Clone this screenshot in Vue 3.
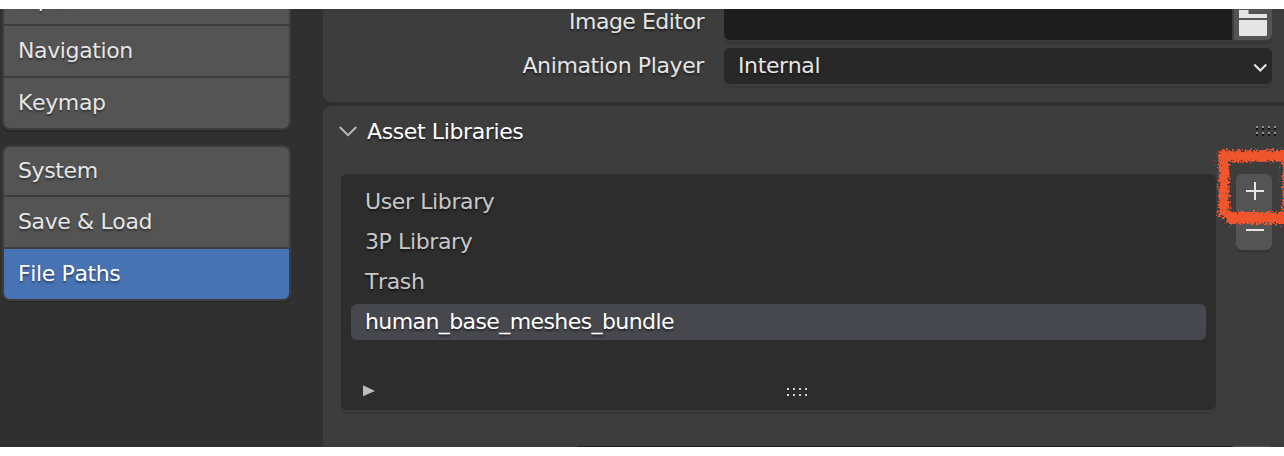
<script setup>
import { ref } from 'vue'

const groups = [
  ['Input', 'Navigation', 'Keymap'],
  ['System', 'Save & Load', 'File Paths']
]

const libraries = [
  'User Library',
  '3P Library',
  'Trash',
  'human_base_meshes_bundle'
]

const activeSection = ref('File Paths')
const activeLibrary = ref('human_base_meshes_bundle')
</script>

<template>
  <div class="preferences">
    <nav class="sidebar">
      <div
        v-for="(group, index) in groups"
        :key="index"
        class="group"
      >
        <button
          v-for="section in group"
          :key="section"
          class="section"
          :class="{ active: section === activeSection }"
          @click="activeSection = section"
        >
          {{ section }}
        </button>
      </div>
    </nav>

    <main class="content">
      <section class="panel applications">
        <div class="row">
          <label class="image-label">Image Editor</label>
          <div class="path-field">
            <div class="path"></div>
            <button class="folder">
              <svg width="28" height="27" viewBox="0 0 28 27">
                <path d="M0 1h9.5v4H28v4H0z M0 11h28v15a1 1 0 0 1-1 1H1a1 1 0 0 1-1-1z" fill="#e5e5e5" />
              </svg>
            </button>
          </div>
        </div>

        <div class="row">
          <label>Animation Player</label>
          <button class="dropdown">
            <span>Internal</span>
            <svg width="14" height="10" viewBox="0 0 14 10">
              <path d="M1.3 1.5l6 6 6-6" fill="none" stroke="#e5e5e5" stroke-width="2.2" />
            </svg>
          </button>
        </div>
      </section>

      <section class="panel libraries">
        <header class="panel-header">
          <svg width="18" height="11" viewBox="0 0 18 11">
            <path d="M.7 1l8.3 8.2L17.3 1" fill="none" stroke="#bcbcbc" stroke-width="2" />
          </svg>
          <h2>Asset Libraries</h2>
          <div class="grip">
            <i v-for="n in 8" :key="n"></i>
          </div>
        </header>

        <div class="library-body">
          <div class="list">
            <div
              v-for="library in libraries"
              :key="library"
              class="item"
              :class="{ selected: library === activeLibrary }"
              @click="activeLibrary = library"
            >
              {{ library }}
            </div>

            <div class="list-footer">
              <svg width="12" height="12" viewBox="0 0 12 12">
                <path d="M0 .3L12 6 0 11.3z" fill="#bcbcbc" />
              </svg>
              <div class="grip light">
                <i v-for="n in 8" :key="n"></i>
              </div>
            </div>
          </div>

          <div class="actions">
            <button>
              <svg width="18" height="18" viewBox="0 0 18 18">
                <path d="M0 9h18M9 0v18" stroke="#e5e5e5" stroke-width="2" />
              </svg>
            </button>
            <button>
              <svg width="18" height="2" viewBox="0 0 18 2">
                <path d="M0 1h18" stroke="#e5e5e5" stroke-width="2" />
              </svg>
            </button>
          </div>
        </div>

        <div class="next-row">
          <div class="next-path"></div>
          <div class="next-button"></div>
        </div>
      </section>
    </main>

    <!-- brush stroke around the add button -->
    <svg class="marker" width="74" height="84" viewBox="0 0 74 84">
      <filter id="rough" x="0" y="0" width="80" height="84" filterUnits="userSpaceOnUse">
        <feTurbulence type="fractalNoise" baseFrequency="0.45" numOctaves="3" seed="4" />
        <feDisplacementMap in="SourceGraphic" scale="10" xChannelSelector="R" yChannelSelector="G" />
      </filter>
      <g filter="url(#rough)" fill="none" stroke="#f0542d">
        <path d="M8.5 12H80" stroke-width="11.5" />
        <path d="M14 7V73" stroke-width="10.5" />
        <path d="M16.5 74H80" stroke-width="12" />
        <path d="M76 8V74" stroke-width="7" />
      </g>
    </svg>
  </div>
</template>

<style>
body {
  margin: 0;
  background: #fff;
}
</style>

<style scoped>
.preferences {
  position: relative;
  display: flex;
  width: 1284px;
  height: 438px;
  margin: 9px 0;
  overflow: hidden;
  background: #303030;
  color: #e5e5e5;
  font-family: 'DejaVu Sans', sans-serif;
  font-size: 22px;
  font-kerning: none;
  letter-spacing: -0.38px;
}

button {
  display: flex;
  padding: 0;
  border: 0;
  background: #545454;
  color: inherit;
  font: inherit;
  font-kerning: none;
  letter-spacing: inherit;
  text-shadow: inherit;
}

svg {
  display: block;
  flex: none;
}

.sidebar {
  flex: none;
  width: 289px;
  margin: -36px 32px 0 2px;
}

.group {
  display: flex;
  flex-direction: column;
  gap: 2px;
  margin-bottom: 15px;
  padding: 2px;
  overflow: hidden;
  border-radius: 8px;
  background: #3d3d3d;
  box-shadow: 0 2px 0 #2b2b2b;
}

.section {
  align-items: center;
  height: 50px;
  padding: 0 0 1px 14px;
  text-shadow: 0 2px 2px rgba(0, 0, 0, 0.4);
}

.section:first-child {
  height: 48px;
  border-radius: 6px 6px 0 0;
}

.section:last-child {
  border-radius: 0 0 6px 6px;
}

.group:first-child .section:first-child {
  height: 49px;
}

.section.active {
  background: #4772b3;
  color: #fff;
}

.content {
  display: flex;
  flex: 1;
  flex-direction: column;
  gap: 4px;
}

.panel {
  background: #3d3d3d;
  text-shadow: 0 2px 2px rgba(0, 0, 0, 0.5);
}

.applications {
  display: flex;
  flex: none;
  flex-direction: column;
  justify-content: flex-end;
  gap: 8px;
  box-sizing: border-box;
  height: 93px;
  padding: 0 12px 18px 0;
  border-radius: 0 0 0 8px;
}

.row {
  display: flex;
  flex: none;
  justify-content: flex-end;
  gap: 20px;
  height: 36px;
  line-height: 36px;
}

.image-label {
  letter-spacing: -0.5px;
}

.path-field {
  display: flex;
  gap: 2px;
  width: 548px;
  overflow: hidden;
  border-radius: 0 0 6px 6px;
  box-shadow: 0 2px 0 #3d3d3d, 0 4px 0 #363636;
}

.path {
  flex: 1;
  background: #1d1d1d;
}

.folder {
  width: 38px;
  padding: 5px 0 0 5px;
  box-sizing: border-box;
}

.dropdown {
  align-items: center;
  justify-content: space-between;
  box-sizing: border-box;
  width: 548px;
  padding: 0 5px 0 14px;
  border-radius: 6px;
  background: #282828;
  line-height: 36px;
  box-shadow: 0 2px 0 #3d3d3d, 0 4px 0 #363636;
}

.dropdown span {
  height: 36px;
}

.dropdown svg {
  margin-top: 3px;
}

.libraries {
  display: flex;
  flex: 1;
  flex-direction: column;
  border-radius: 8px 0 0 0;
}

.panel-header {
  display: flex;
  align-items: center;
  height: 50px;
  padding: 0 8px 0 16px;
}

.panel-header .grip {
  margin-bottom: 2px;
}

h2 {
  flex: 1;
  margin: 0 0 0 10px;
  color: #fff;
  font-size: inherit;
  font-weight: normal;
}

.grip {
  display: grid;
  grid-template-columns: repeat(4, 2px);
  gap: 4px;
}

.grip i {
  width: 2px;
  height: 2px;
  background: #8e8e8e;
  box-shadow: 0 2px 0 #101010;
}

.grip.light {
  margin-top: 2px;
}

.grip.light i {
  background: #d0d0d0;
  box-shadow: none;
}

.library-body {
  display: flex;
  gap: 20px;
  margin: 18px 12px 0 18px;
}

.list {
  display: flex;
  flex: 1;
  flex-direction: column;
  gap: 4px;
  box-sizing: border-box;
  height: 236px;
  padding: 10px;
  border-radius: 6px;
  background: #2d2d2d;
  color: #c8c8c8;
  box-shadow: 0 2px 0 #3d3d3d, 0 4px 0 #363636;
}

.item {
  height: 36px;
  padding-left: 14px;
  border-radius: 6px;
  line-height: 35px;
}

.item.selected {
  background: #47484e;
  color: #fff;
  letter-spacing: -0.59px;
}

.list-footer {
  display: flex;
  align-items: center;
  gap: 412px;
  margin: 41px 12px 0;
}

.actions {
  display: flex;
  flex-direction: column;
  width: 36px;
  height: 76px;
  border-radius: 6px;
  background: #545454;
  box-shadow: 0 3px 0 #353535;
}

.actions button {
  justify-content: center;
  height: 38px;
  padding: 8px 0 0 2px;
  background: none;
}

.actions button + button {
  padding-top: 17px;
}

.next-row {
  display: flex;
  gap: 2px;
  margin: 36px 14px 0 255px;
}

.next-path {
  flex: 1;
  height: 1px;
  background: #1d1d1d;
}

.next-button {
  width: 36px;
  height: 1px;
  background: #545454;
}

.marker {
  position: absolute;
  top: 135px;
  right: 0;
}
</style>
